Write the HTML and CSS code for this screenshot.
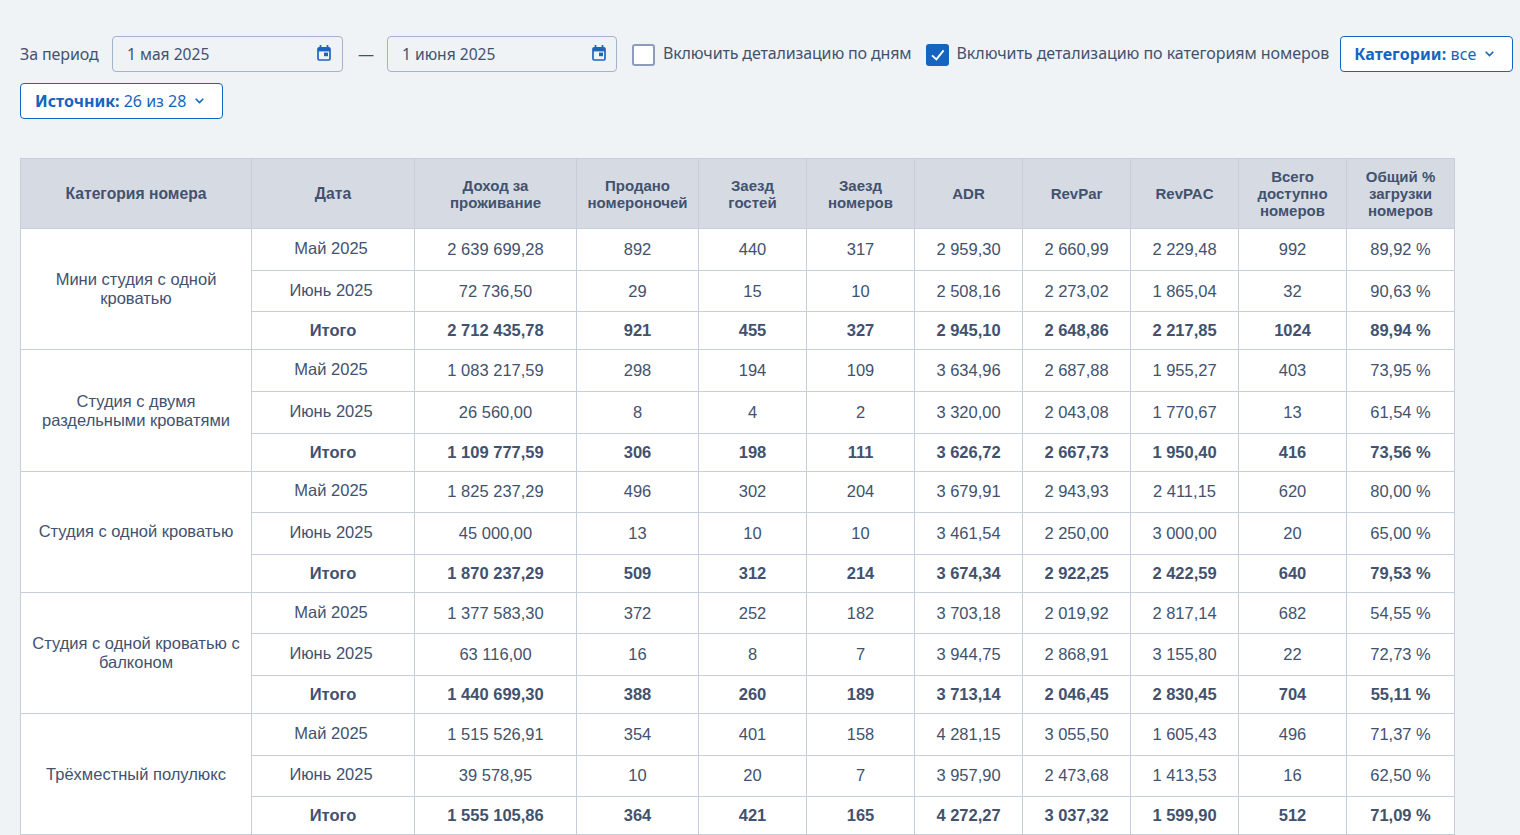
FILE: index.html
```html
<!DOCTYPE html>
<html lang="ru">
<head>
<meta charset="utf-8">
<title>Отчёт по категориям номеров</title>
<link rel="stylesheet" href="styles.css">
</head>
<body>
<form class="filters">
  <span class="label">За период</span>
  <div class="date"><span>1 мая 2025</span><svg class="cal" viewBox="0 0 14 16"><path class="cal-line" d="M3.5 0v3.5M10.5 0v3.5"/><rect class="cal-line" x="1" y="2.8" width="12" height="12.2" rx="1.2"/><rect class="cal-fill" x="1" y="3" width="12" height="3.4"/><rect class="cal-fill" x="7" y="7.6" width="4" height="3.6"/></svg></div>
  <span class="dash">—</span>
  <div class="date date-second"><span>1 июня 2025</span><svg class="cal" viewBox="0 0 14 16"><path class="cal-line" d="M3.5 0v3.5M10.5 0v3.5"/><rect class="cal-line" x="1" y="2.8" width="12" height="12.2" rx="1.2"/><rect class="cal-fill" x="1" y="3" width="12" height="3.4"/><rect class="cal-fill" x="7" y="7.6" width="4" height="3.6"/></svg></div>
  <div class="check check-days"><span class="box"></span><span class="check-text">Включить детализацию по дням</span></div>
  <div class="check check-cats"><span class="box on"><svg viewBox="0 0 23 22"><path d="M6 11.4l4.4 4L17.6 6.4"/></svg></span><span class="check-text">Включить детализацию по категориям номеров</span></div>
  <button type="button" class="pick pick-cat"><span><b>Категории:</b> все</span><svg viewBox="0 0 9 6"><path d="M.7 .8l3.8 3.8L8.3 .8"/></svg></button>
  <button type="button" class="pick pick-src"><span><b>Источник:</b> 26 из 28</span><svg viewBox="0 0 9 6"><path d="M.7 .8l3.8 3.8L8.3 .8"/></svg></button>
</form>
<table class="report">
  <colgroup>
    <col class="c-cat"><col class="c-date"><col class="c-inc"><col class="c-sold"><col class="c-w"><col class="c-w"><col class="c-w"><col class="c-w"><col class="c-w"><col class="c-w"><col class="c-w">
  </colgroup>
  <thead>
    <tr><th class="big">Категория номера</th><th class="big">Дата</th><th>Доход за<br>проживание</th><th>Продано<br>номероночей</th><th>Заезд<br>гостей</th><th>Заезд<br>номеров</th><th>ADR</th><th>RevPar</th><th>RevPAC</th><th>Всего<br>доступно<br>номеров</th><th>Общий %<br>загрузки<br>номеров</th></tr>
  </thead>
  <tbody>
    <tr><td rowspan="3" class="cat">Мини студия с одной кроватью</td><td class="d">Май 2025</td><td>2 639 699,28</td><td>892</td><td>440</td><td>317</td><td>2 959,30</td><td>2 660,99</td><td>2 229,48</td><td>992</td><td>89,92 %</td></tr>
    <tr><td class="d">Июнь 2025</td><td>72 736,50</td><td>29</td><td>15</td><td>10</td><td>2 508,16</td><td>2 273,02</td><td>1 865,04</td><td>32</td><td>90,63 %</td></tr>
    <tr class="sum"><td>Итого</td><td>2 712 435,78</td><td>921</td><td>455</td><td>327</td><td>2 945,10</td><td>2 648,86</td><td>2 217,85</td><td>1024</td><td>89,94 %</td></tr>

    <tr><td rowspan="3" class="cat">Студия с двумя раздельными кроватями</td><td class="d">Май 2025</td><td>1 083 217,59</td><td>298</td><td>194</td><td>109</td><td>3 634,96</td><td>2 687,88</td><td>1 955,27</td><td>403</td><td>73,95 %</td></tr>
    <tr><td class="d">Июнь 2025</td><td>26 560,00</td><td>8</td><td>4</td><td>2</td><td>3 320,00</td><td>2 043,08</td><td>1 770,67</td><td>13</td><td>61,54 %</td></tr>
    <tr class="sum"><td>Итого</td><td>1 109 777,59</td><td>306</td><td>198</td><td>111</td><td>3 626,72</td><td>2 667,73</td><td>1 950,40</td><td>416</td><td>73,56 %</td></tr>

    <tr><td rowspan="3" class="cat">Студия с одной кроватью</td><td class="d">Май 2025</td><td>1 825 237,29</td><td>496</td><td>302</td><td>204</td><td>3 679,91</td><td>2 943,93</td><td>2 411,15</td><td>620</td><td>80,00 %</td></tr>
    <tr><td class="d">Июнь 2025</td><td>45 000,00</td><td>13</td><td>10</td><td>10</td><td>3 461,54</td><td>2 250,00</td><td>3 000,00</td><td>20</td><td>65,00 %</td></tr>
    <tr class="sum"><td>Итого</td><td>1 870 237,29</td><td>509</td><td>312</td><td>214</td><td>3 674,34</td><td>2 922,25</td><td>2 422,59</td><td>640</td><td>79,53 %</td></tr>

    <tr><td rowspan="3" class="cat">Студия с одной кроватью с балконом</td><td class="d">Май 2025</td><td>1 377 583,30</td><td>372</td><td>252</td><td>182</td><td>3 703,18</td><td>2 019,92</td><td>2 817,14</td><td>682</td><td>54,55 %</td></tr>
    <tr><td class="d">Июнь 2025</td><td>63 116,00</td><td>16</td><td>8</td><td>7</td><td>3 944,75</td><td>2 868,91</td><td>3 155,80</td><td>22</td><td>72,73 %</td></tr>
    <tr class="sum"><td>Итого</td><td>1 440 699,30</td><td>388</td><td>260</td><td>189</td><td>3 713,14</td><td>2 046,45</td><td>2 830,45</td><td>704</td><td>55,11 %</td></tr>

    <tr><td rowspan="3" class="cat">Трёхместный полулюкс</td><td class="d">Май 2025</td><td>1 515 526,91</td><td>354</td><td>401</td><td>158</td><td>4 281,15</td><td>3 055,50</td><td>1 605,43</td><td>496</td><td>71,37 %</td></tr>
    <tr><td class="d">Июнь 2025</td><td>39 578,95</td><td>10</td><td>20</td><td>7</td><td>3 957,90</td><td>2 473,68</td><td>1 413,53</td><td>16</td><td>62,50 %</td></tr>
    <tr class="sum"><td>Итого</td><td>1 555 105,86</td><td>364</td><td>421</td><td>165</td><td>4 272,27</td><td>3 037,32</td><td>1 599,90</td><td>512</td><td>71,09 %</td></tr>
  </tbody>
</table>
</body>
</html>
```
FILE: styles.css
```css
* { box-sizing: border-box; }
html, body { height: 100%; }
body {
  margin: 0;
  padding: 36px 0 0 20px;
  background: #f0f3f6;
  color: #42526e;
  font-family: "Liberation Sans", Arial, sans-serif;
  font-size: 16.5px;
  overflow: hidden;
}
.filters {
  display: flex;
  flex-wrap: wrap;
  align-items: center;
  gap: 11px 14px;
  width: 1500px;
  font-family: "Noto Sans", sans-serif;
  font-size: 16px;
  margin-bottom: 39px;
}
.label { flex: none; width: 79px; margin-right: -1px; white-space: nowrap; letter-spacing: -.1px; }
.date {
  width: 231px;
  height: 36px;
  padding: 0 11px 0 14px;
  display: flex;
  align-items: center;
  justify-content: space-between;
  border: 1px solid #a3b2cd;
  border-radius: 4px;
  font-size: 15.6px;
}
.date-second { width: 230px; padding-right: 10px; }
.cal { flex: none; width: 14px; height: 16px; margin-top: -2px; }
.cal-line { fill: none; stroke: #1d65c1; stroke-width: 1.7; }
.cal-fill { fill: #1d65c1; }
.dash { width: 15px; margin-left: 1px; }
.check { display: flex; align-items: center; gap: 8px; }
.check-days { margin-left: 1px; letter-spacing: -.14px; }
.check-cats { letter-spacing: -.05px; }
.check-text { padding-bottom: 3px; }
.box {
  width: 23px;
  height: 22px;
  flex: none;
  margin-top: 2px;
  border: 2px solid #8c9cba;
  border-radius: 3px;
  background: #fff;
}
.box.on { border: 0; background: #1565c0; }
.box svg { display: block; width: 23px; height: 22px; fill: none; stroke: #fff; stroke-width: 1.9; }
.pick {
  height: 36px;
  padding: 0 18px 0 14px;
  display: flex;
  align-items: center;
  justify-content: space-between;
  border: 1px solid #1565c0;
  border-radius: 4px;
  background: #fff;
  color: #1565c0;
  font: inherit;
  white-space: nowrap;
}
.pick b { font-weight: 700; }
.pick svg { flex: none; width: 9px; height: 6px; fill: none; stroke: #1565c0; stroke-width: 1.6; }
.pick-cat { width: 173px; margin-left: -3px; padding-left: 13px; letter-spacing: .1px; }
.pick-src { width: 203px; }
.report {
  border-collapse: collapse;
  table-layout: fixed;
  width: 1435px;
  background: #fff;
  text-align: center;
}
.c-cat { width: 231px; }
.c-date { width: 163px; }
.c-inc { width: 162px; }
.c-sold { width: 122px; }
.c-w { width: 108px; }
th, td { border: 1px solid #c6cddb; padding: 0; }
th {
  height: 70.3px;
  background: #d6dbe3;
  font-size: 15px;
  line-height: 17px;
  font-weight: 700;
  color: #42526e;
}
th.big { font-size: 15.7px; }
tbody tr { height: 41.6px; }
tbody tr.sum { height: 38px; }
td.cat { line-height: 19px; padding: 0 10px; }
td.d { padding: 0 4px 2px 0; }
.sum td { font-weight: 700; }
```
